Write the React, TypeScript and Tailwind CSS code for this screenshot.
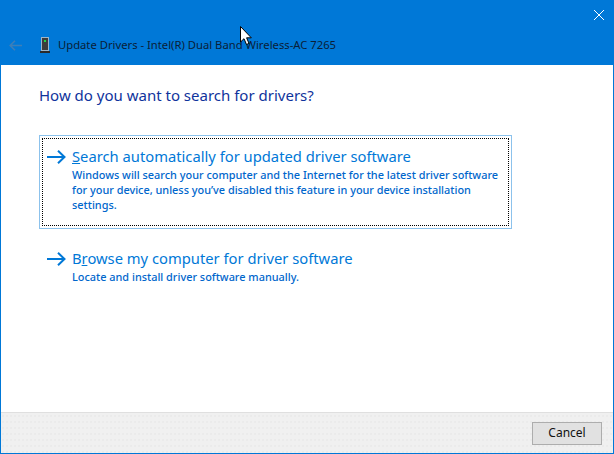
const font = { fontFamily: '"Noto Sans", "Open Sans", sans-serif' };

function Arrow() {
  return (
    <svg width="19" height="14" viewBox="0 0 19 14" className="shrink-0" fill="none" stroke="#0078d7" strokeWidth="2">
      <path d="M0 7H17.5M11 0.8L17.5 7L11 13.2" />
    </svg>
  );
}

function Option({ focused, first, rest, desc }: { focused?: boolean; first: React.ReactNode; rest: string; desc: string[] }) {
  return (
    <div className={focused ? "w-[473px] h-[94px] border border-[#8cc2ec] p-[2px]" : "w-[473px] h-[94px] border border-transparent p-[2px]"}>
      <div className={focused ? "h-full border border-dotted border-black pl-[4px] pt-[7px] flex gap-2" : "h-full border border-dotted border-transparent pl-[4px] pt-[7px] flex gap-2"}>
        <div className="pt-[4px]"><Arrow /></div>
        <div className="-ml-[2px]">
          <div className="text-[14.75px] leading-[20px] text-[#0078d7] whitespace-nowrap">{first}{rest}</div>
          <div className="text-[10.9px] leading-[15px] text-[#0066cc] mt-[1px] font-medium">
            {desc.map((d) => (<div key={d} className="whitespace-nowrap">{d}</div>))}
          </div>
        </div>
      </div>
    </div>
  );
}

export default function App() {
  return (
    <div className="relative w-[614px] h-[454px] overflow-hidden bg-white border-x border-b border-[#0078d7] flex flex-col" style={font}>
      <div className="h-[65px] -mx-px bg-[#0078d7] shrink-0 relative flex flex-col">
        <div className="h-[29px] flex justify-end items-start pt-[10px] pr-[10px]">
          <svg width="10" height="10" viewBox="0 0 10 10" stroke="#fff" strokeWidth="1"><path d="M0 0L10 10M10 0L0 10" /></svg>
        </div>
        <div className="flex items-center h-[32px] pl-[9px]">
          <svg width="13" height="11" viewBox="0 0 13 11" fill="none" stroke="#3d7fb8" strokeWidth="1.6" className="shrink-0">
            <path d="M13 5.5H1.2M6 0.8L1.2 5.5L6 10.2" />
          </svg>
          <svg width="10" height="16" viewBox="0 0 10 16" className="ml-[18px] shrink-0">
            <rect x="1" y="0" width="8" height="14" fill="#9fb6c8" />
            <rect x="2" y="1" width="6" height="12" fill="#3c3c3c" />
            <rect x="4" y="3" width="2" height="2" fill="#22d646" />
            <rect x="0" y="14" width="10" height="2" fill="#2a2a2a" />
          </svg>
          <span className="ml-[8px] text-[11.25px] text-[#0a1e38] whitespace-nowrap">Update Drivers - Intel(R) Dual Band Wireless-AC 7265</span>
        </div>
        <svg width="12" height="20" viewBox="0 0 12 20" className="absolute left-[240px] top-[26px]">
          <path d="M0.5 0.5V16L4 12.7L6.5 18.5L9 17.4L6.6 11.8H11.3Z" fill="#fff" stroke="#000" strokeWidth="1" />
        </svg>
      </div>

      <div className="flex-1 pl-[38px]">
        <h1 className="text-[15px] leading-[20px] text-[#0f339c] font-normal mt-[20px]">How do you want to search for drivers?</h1>
        <div className="mt-[30px] flex flex-col gap-[8px]">
          <Option
            focused
            first={<span className="underline">S</span>}
            rest="earch automatically for updated driver software"
            desc={[
              "Windows will search your computer and the Internet for the latest driver software",
              "for your device, unless you’ve disabled this feature in your device installation",
              "settings.",
            ]}
          />
          <Option
            first={<>B<span className="underline">r</span></>}
            rest="owse my computer for driver software"
            desc={["Locate and install driver software manually."]}
          />
        </div>
      </div>

      <div className="h-[41px] shrink-0 bg-[#f0f0f0] bg-[radial-gradient(circle,#ebebeb_0.7px,transparent_0.9px)] bg-[length:4px_6px] border-t border-[#dfdfdf] flex justify-end items-center pr-[11px]">
        <button className="w-[70px] h-[23px] bg-[#e1e1e1] border border-[#adadad] text-[12px] text-[#111] flex items-center justify-center">Cancel</button>
      </div>
    </div>
  );
}
